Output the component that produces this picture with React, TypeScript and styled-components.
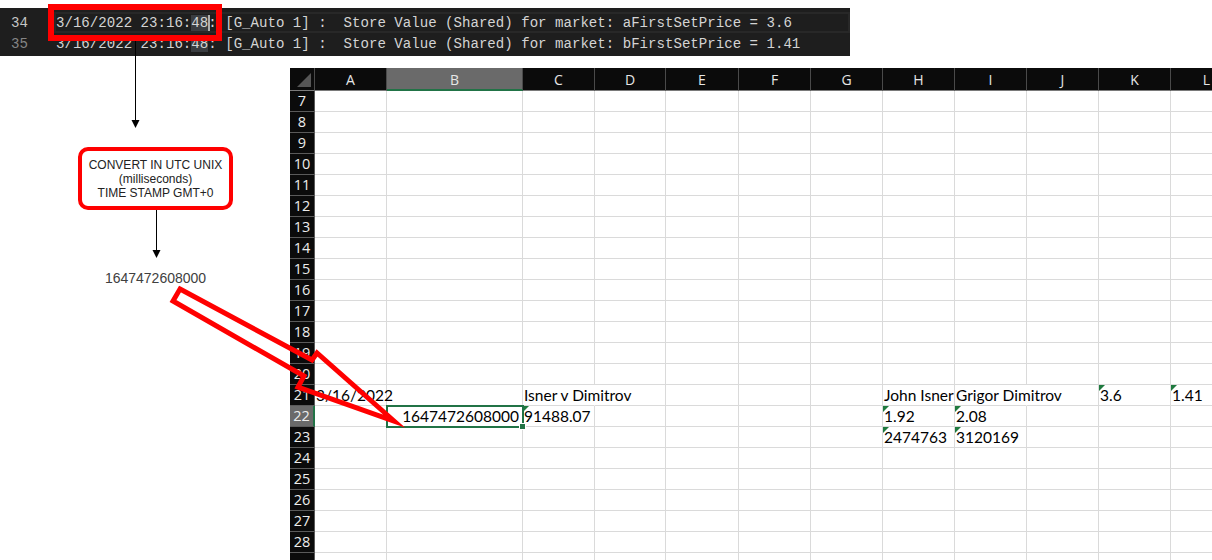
import React from 'react';
import styled, { createGlobalStyle, css } from 'styled-components';

const Global = createGlobalStyle`
  html, body { margin: 0; padding: 0; background: #ffffff; }
  body { width: 1212px; height: 560px; overflow: hidden; font-family: "Liberation Sans", Arial, sans-serif; }
`;

const Page = styled.div`
  position: relative;
  width: 1212px;
  height: 560px;
  overflow: hidden;
  padding-top: 8px;
  box-sizing: border-box;
`;

/* ---------- log viewer ---------- */
const LogPanel = styled.div`
  width: 850px;
  height: 48px;
  background: #1e1e1e;
  font-family: "Liberation Mono", "DejaVu Sans Mono", monospace;
  font-size: 14.1px;
  padding-top: 4px;
  box-sizing: border-box;
  overflow: hidden;
`;

const LogLine = styled.div`
  display: flex;
  height: 21px;
  line-height: 21px;
  white-space: pre;
`;

const LineNo = styled.span<{ $active?: boolean }>`
  flex: none;
  width: 28px;
  padding-top: 1px;
  text-align: right;
  color: ${p => (p.$active ? '#c6c6c6' : '#858585')};
`;

const LineText = styled.span<{ $active?: boolean }>`
  flex: 1;
  margin-left: 26px;
  padding: 1px 0 0 2px;
  color: #d4d4d4;
  ${p => p.$active && css`box-shadow: inset 0 0 0 2px #282828;`}
`;

const Match = styled.span`
  background: #3a3d41;
`;

const Caret = styled.span<{ $on?: boolean }>`
  ${p => p.$on && css`box-shadow: inset 2px 0 0 #aeafad;`}
`;

const StampBox = styled.div`
  position: absolute;
  left: 48px;
  top: 4px;
  width: 174px;
  height: 37px;
  box-sizing: border-box;
  border: 6px solid #ff0000;
  z-index: 6;
`;

/* ---------- lower area ---------- */
const Lower = styled.div`
  display: flex;
  margin-top: 12px;
  height: 492px;
`;

const Notes = styled.div`
  flex: none;
  width: 290px;
  display: flex;
  flex-direction: column;
  align-items: flex-start;
  padding: 79px 0 0 78px;
  box-sizing: border-box;
`;

const NoteBox = styled.div`
  width: 155px;
  height: 63px;
  box-sizing: border-box;
  border: 4px solid #ff0000;
  border-radius: 10px;
  display: flex;
  flex-direction: column;
  justify-content: center;
  align-items: center;
  font-family: "Liberation Sans", Arial, sans-serif;
  font-size: 12px;
  line-height: 14px;
  color: #222;
  text-align: center;
`;

const StampValue = styled.div`
  width: 155px;
  margin-top: 60px;
  text-align: center;
  font-family: "Liberation Sans", Arial, sans-serif;
  font-size: 14px;
  line-height: 16px;
  color: #404040;
`;

/* ---------- spreadsheet ---------- */
const Sheet = styled.div`
  flex: 1;
  overflow: hidden;
  background: #ffffff;
`;

const Grid = styled.div`
  display: grid;
  grid-template-columns: 25px 72px 136px 72px 71px 73px 72px 72px 72px 72px 72px 72px 72px;
  grid-template-rows: 23px;
  grid-auto-rows: 21px;
  width: max-content;
`;

const Corner = styled.div`
  position: relative;
  background: #0b0b0b;
  border-right: 1px solid #4a4a4a;
  border-bottom: 1px solid #7a7a7a;
  box-sizing: border-box;
  &::after {
    content: '';
    position: absolute;
    right: 3px;
    bottom: 3px;
    width: 0;
    height: 0;
    border-left: 14px solid transparent;
    border-bottom: 14px solid #565656;
  }
`;

const ColHead = styled.div<{ $selected?: boolean }>`
  box-sizing: border-box;
  background: ${p => (p.$selected ? '#6a6a6a' : '#0b0b0b')};
  border-right: 1px solid #4a4a4a;
  border-bottom: ${p => (p.$selected ? '2px solid #217346' : '1px solid #7a7a7a')};
  color: #e6e6e6;
  font-family: "Open Sans", "Noto Sans", sans-serif;
  font-size: 14px;
  line-height: 22px;
  text-align: center;
  padding-top: 1px;
`;

const RowHead = styled.div<{ $selected?: boolean }>`
  box-sizing: border-box;
  background: ${p => (p.$selected ? '#6a6a6a' : '#0b0b0b')};
  border-right: ${p => (p.$selected ? '2px solid #217346' : '1px solid #5a5a5a')};
  border-bottom: 1px solid #5a5a5a;
  color: #ececec;
  font-family: "Open Sans", "Noto Sans", sans-serif;
  font-size: 14.5px;
  line-height: 20px;
  text-align: center;
`;

const Cell = styled.div<{ $right?: boolean; $flag?: boolean; $spill?: boolean; $selected?: boolean }>`
  position: relative;
  box-sizing: border-box;
  border-right: 1px solid ${p => (p.$spill ? 'transparent' : '#dadada')};
  border-bottom: 1px solid #dadada;
  padding: 0 3px 0 1px;
  font-family: Lato, "Liberation Sans", sans-serif;
  font-size: 15.5px;
  line-height: 21px;
  color: #000;
  white-space: nowrap;
  text-align: ${p => (p.$right ? 'right' : 'left')};
  ${p =>
    p.$flag &&
    css`
      &::before {
        content: '';
        position: absolute;
        left: 0;
        top: 0;
        width: 0;
        height: 0;
        border-top: 6px solid #1f7a3f;
        border-right: 6px solid transparent;
      }
    `}
  ${p =>
    p.$selected &&
    css`
      z-index: 2;
      outline: 2px solid #217346;
      outline-offset: -1px;
      &::after {
        content: '';
        position: absolute;
        right: -4px;
        bottom: -4px;
        width: 5px;
        height: 5px;
        background: #217346;
        border: 1px solid #ffffff;
      }
    `}
`;

const Overlay = styled.svg`
  position: absolute;
  left: 0;
  top: 0;
  width: 1212px;
  height: 560px;
  pointer-events: none;
  z-index: 5;
`;

type CellData = { text: string; right?: boolean; flag?: boolean; spill?: boolean; selected?: boolean };

const COLS = ['A', 'B', 'C', 'D', 'E', 'F', 'G', 'H', 'I', 'J', 'K', 'L'];

const DATA: Record<number, Record<string, CellData>> = {
  21: {
    A: { text: '3/16/2022' },
    C: { text: 'Isner v Dimitrov', spill: true },
    H: { text: 'John Isner' },
    I: { text: 'Grigor Dimitrov', spill: true },
    K: { text: '3.6', flag: true },
    L: { text: '1.41', flag: true },
  },
  22: {
    B: { text: '1647472608000', right: true, selected: true },
    C: { text: '91488.07', flag: true },
    H: { text: '1.92', flag: true },
    I: { text: '2.08', flag: true },
  },
  23: {
    H: { text: '2474763', flag: true },
    I: { text: '3120169', flag: true },
  },
};

/* rows 7..28 are visible; one more row peeks in at the bottom edge */
const ROWS = Array.from({ length: 23 }, (_, i) => i + 7);

export default function App() {
  return (
    <>
      <Global />
      <Page>
        <LogPanel>
          <LogLine>
            <LineNo $active>34</LineNo>
            <LineText $active>
              3/16/2022 23:16:<Match>48</Match>
              <Caret $on>:</Caret> [G_Auto 1] :  Store Value (Shared) for market: aFirstSetPrice = 3.6
            </LineText>
          </LogLine>
          <LogLine>
            <LineNo>35</LineNo>
            <LineText>
              3/16/2022 23:16:<Match>48</Match>
              <Caret>:</Caret> [G_Auto 1] :  Store Value (Shared) for market: bFirstSetPrice = 1.41
            </LineText>
          </LogLine>
        </LogPanel>
        <StampBox />

        <Lower>
          <Notes>
            <NoteBox>
              <span>CONVERT IN UTC UNIX</span>
              <span>(milliseconds)</span>
              <span>TIME STAMP GMT+0</span>
            </NoteBox>
            <StampValue>1647472608000</StampValue>
          </Notes>

          <Sheet>
            <Grid>
              <Corner />
              {COLS.map(c => (
                <ColHead key={c} $selected={c === 'B'}>
                  {c}
                </ColHead>
              ))}
              {ROWS.map(r => (
                <React.Fragment key={r}>
                  <RowHead $selected={r === 22}>{r <= 28 ? r : ''}</RowHead>
                  {COLS.map(c => {
                    const d = DATA[r]?.[c];
                    return (
                      <Cell
                        key={c}
                        $right={d?.right}
                        $flag={d?.flag}
                        $spill={d?.spill}
                        $selected={d?.selected}
                      >
                        {d?.text}
                      </Cell>
                    );
                  })}
                </React.Fragment>
              ))}
            </Grid>
          </Sheet>
        </Lower>

        <Overlay viewBox="0 0 1212 560">
          <line x1="135.5" y1="41" x2="135.5" y2="121" stroke="#000" strokeWidth="1" />
          <polygon points="131.5,120 139.5,120 135.5,128" fill="#000" />
          <line x1="156.5" y1="210" x2="156.5" y2="251" stroke="#000" strokeWidth="1" />
          <polygon points="152.5,250 160.5,250 156.5,258" fill="#000" />
          <polygon
            points="180,289 312,360 317,353 394,421 298,387 304,376 173,301"
            fill="none"
            stroke="#ff0000"
            strokeWidth="5"
            strokeLinejoin="miter"
            strokeMiterlimit="10"
          />
        </Overlay>
      </Page>
    </>
  );
}
